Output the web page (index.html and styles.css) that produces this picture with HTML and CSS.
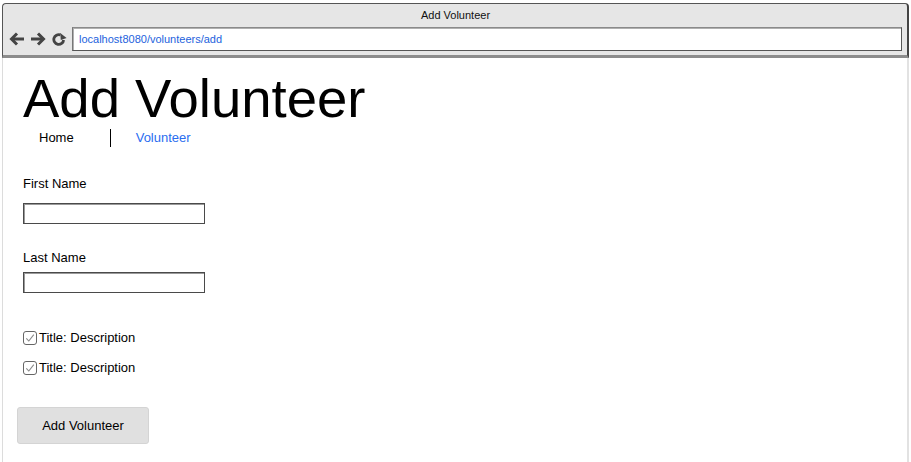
FILE: index.html
```html
<!DOCTYPE html>
<html>
<head>
<meta charset="utf-8">
<title>Add Volunteer</title>
<link rel="stylesheet" href="styles.css">
</head>
<body>
<div class="window">
  <div class="titlebar">
    <div class="title">Add Volunteer</div>
    <div class="toolbar">
      <svg class="nav-icon" width="16" height="14" viewBox="0 0 16 14">
        <path d="M15 7H3" stroke="#444" stroke-width="3" fill="none"/>
        <path d="M8 1.5L2.5 7L8 12.5" stroke="#444" stroke-width="3" fill="none" stroke-linejoin="miter"/>
      </svg>
      <svg class="nav-icon fwd" width="16" height="14" viewBox="0 0 16 14">
        <path d="M1 7H13" stroke="#444" stroke-width="3" fill="none"/>
        <path d="M8 1.5L13.5 7L8 12.5" stroke="#444" stroke-width="3" fill="none"/>
      </svg>
      <svg class="nav-icon refresh" width="15" height="13" viewBox="0 0 15 13">
        <path d="M11.6 7A4.9 4.9 0 1 1 8.4 1.9" stroke="#444" stroke-width="2.8" fill="none"/>
        <path d="M8.2 0L14.6 5L8.8 7Z" fill="#444"/>
      </svg>
      <div class="url">localhost8080/volunteers/add</div>
    </div>
  </div>
  <div class="content">
    <h1 class="heading">Add Volunteer</h1>
    <nav class="crumbs">
      <span class="crumb home">Home</span>
      <span class="sep"></span>
      <span class="crumb active">Volunteer</span>
    </nav>
    <div class="field first">
      <label class="label">First Name</label>
      <div class="input"></div>
    </div>
    <div class="field last">
      <label class="label">Last Name</label>
      <div class="input"></div>
    </div>
    <div class="checks">
      <div class="check">
        <svg class="box" width="14" height="14" viewBox="0 0 14 14">
          <rect x="0.5" y="0.5" width="13" height="13" rx="2.5" fill="#fff" stroke="#666" stroke-width="1"/>
          <path d="M3.3 7.3L5.8 10L10.8 3.6" stroke="#8a8a8a" stroke-width="1.1" fill="none"/>
        </svg>
        <span class="check-text">Title: Description</span>
      </div>
      <div class="check">
        <svg class="box" width="14" height="14" viewBox="0 0 14 14">
          <rect x="0.5" y="0.5" width="13" height="13" rx="2.5" fill="#fff" stroke="#666" stroke-width="1"/>
          <path d="M3.3 7.3L5.8 10L10.8 3.6" stroke="#8a8a8a" stroke-width="1.1" fill="none"/>
        </svg>
        <span class="check-text">Title: Description</span>
      </div>
    </div>
    <button class="submit">Add Volunteer</button>
  </div>
</div>
</body>
</html>
```
FILE: styles.css
```css
html, body {
  margin: 0;
  padding: 0;
  background: #fff;
  font-family: "Liberation Sans", Arial, sans-serif;
  color: #000;
  overflow: hidden;
}

.window {
  margin: 3px 2px 0 2px;
  height: 459px;
  display: flex;
  flex-direction: column;
}

.titlebar {
  background: #e6e6e6;
  border: 1px solid #555;
  border-right: 2px solid #444;
  border-bottom: 3px solid #8c8c8c;
  border-radius: 4px 4px 0 0;
  padding: 0 5px 4px 6px;
}

.title {
  height: 22px;
  line-height: 22px;
  text-align: center;
  font-size: 11px;
  color: #111;
}

.toolbar {
  margin-top: 1px;
  display: flex;
  align-items: center;
  height: 24px;
}

.nav-icon {
  display: block;
  flex: none;
}

.fwd {
  margin-left: 5px;
}

.refresh {
  margin-left: 6px;
}

.url {
  flex: 1;
  margin-left: 5px;
  height: 24px;
  box-sizing: border-box;
  background: #fff;
  border: 1px solid #555;
  border-top-color: #8a8a8a;
  border-left-color: #777;
  box-shadow: inset 1px 1px 0 #b0b0b0;
  font-size: 11px;
  line-height: 22px;
  padding-left: 6px;
  color: #1d62dd;
}

.content {
  flex: 1;
  border-left: 1px solid #dcdcdc;
  border-right: 2px solid #e2e2e2;
  padding-left: 20px;
}

.heading {
  margin: 13px 0 0 0;
  font-size: 54.5px;
  line-height: 55px;
  font-weight: normal;
  height: 55px;
}

.crumbs {
  margin-top: 2px;
  height: 20px;
  display: flex;
  align-items: center;
  font-size: 13px;
}

.crumb {
  line-height: 20px;
}

.home {
  margin-left: 16px;
}

.sep {
  width: 1px;
  height: 18px;
  background: #000;
  margin-left: 36px;
}

.active {
  margin-left: 25px;
  color: #2a6df0;
}

.field {
  display: flex;
  flex-direction: column;
}

.field.first {
  margin-top: 28px;
}

.field.last {
  margin-top: 26px;
}

.label {
  font-size: 13px;
  line-height: 16px;
  height: 16px;
}

.input {
  width: 182px;
  height: 21px;
  box-sizing: border-box;
  border: 1px solid #4a4a4a;
  box-shadow: inset 1px 1px 0 #9a9a9a;
  background: #fff;
}

.first .input {
  margin-top: 11px;
}

.last .input {
  margin-top: 6px;
}

.checks {
  margin-top: 37px;
  display: flex;
  flex-direction: column;
  gap: 14px;
}

.check {
  display: flex;
  align-items: center;
  height: 16px;
}

.box {
  display: block;
  flex: none;
}

.check-text {
  margin-left: 2px;
  font-size: 13px;
  line-height: 16px;
}

.submit {
  display: block;
  margin: 31px 0 0 -6px;
  width: 132px;
  height: 37px;
  background: #e0e0e0;
  border: 1px solid #d4d4d4;
  border-radius: 3px;
  font-family: "Liberation Sans", Arial, sans-serif;
  font-size: 13px;
  color: #000;
  padding: 0;
}
```
